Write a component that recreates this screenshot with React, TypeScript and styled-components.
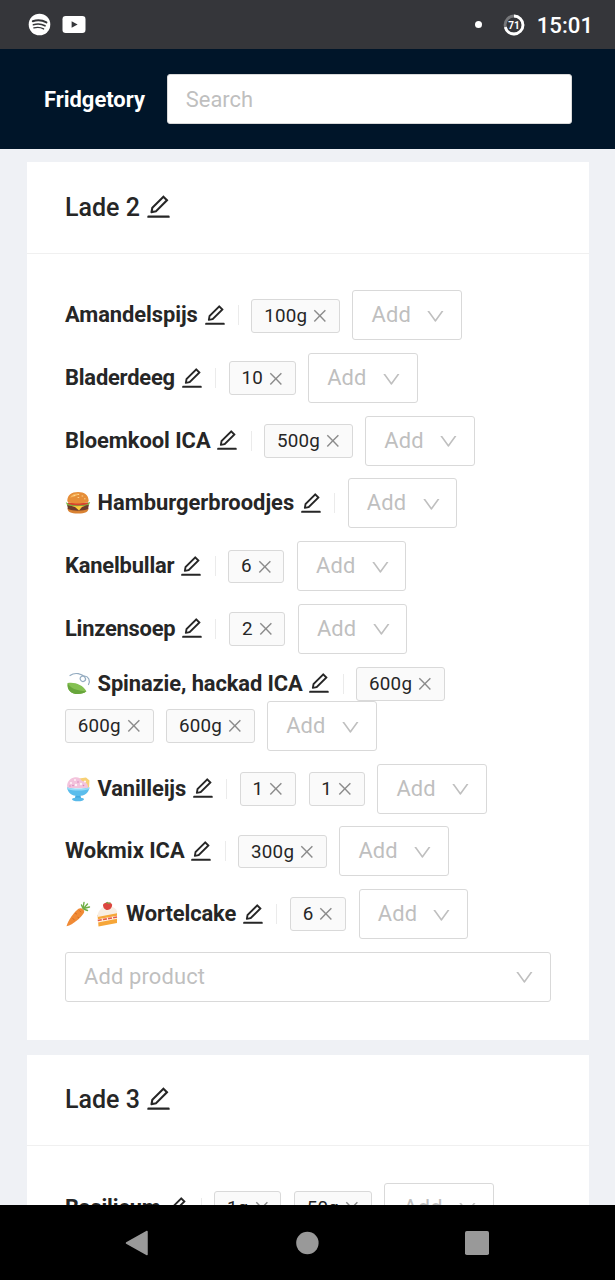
import React from 'react';
import styled, { createGlobalStyle } from 'styled-components';
import { AiOutlineClose, AiOutlineDown, AiOutlineEdit } from 'react-icons/ai';

const GlobalStyle = createGlobalStyle`
  * { box-sizing: border-box; }
  body {
    margin: 0;
    font-family: Roboto, "Liberation Sans", sans-serif;
    font-size: 21.9px;
    color: #262626;
    background: #eff1f5;
  }
`;

const Screen = styled.div`
  display: flex;
  flex-direction: column;
  width: 615px;
  height: 1280px;
  overflow: hidden;
`;

const StatusBar = styled.div`
  flex: none;
  height: 49px;
  display: flex;
  align-items: center;
  padding: 0 22px 0 28px;
  background: #35363a;
  color: #fff;
`;

const StatusGroup = styled.div<{ $end?: boolean }>`
  display: flex;
  align-items: center;
  margin-left: ${(p) => (p.$end ? 'auto' : '0')};
  gap: 11.3px;
  svg { display: block; }
`;

const Dot = styled.span`
  width: 7px;
  height: 7px;
  margin-right: 10px;
  border-radius: 50%;
  background: #fff;
`;

const Clock = styled.span`
  font-size: 22.2px;
  font-weight: 500;
  line-height: 26px;
`;

const Header = styled.header`
  flex: none;
  height: 100px;
  display: flex;
  align-items: center;
  padding: 0 43px 0 44px;
  background: #001529;
`;

const Brand = styled.div`
  width: 123px;
  color: #fff;
  font-weight: 700;
`;

const Search = styled.div`
  flex: 1;
  height: 50px;
  padding: 1px 17.8px 0;
  border: 1px solid #d9d9d9;
  border-radius: 3px;
  background: #fff;
  color: #bfbfbf;
  line-height: 48px;
`;

const Content = styled.main`
  flex: 1;
  min-height: 0;
  overflow: hidden;
  display: flex;
  flex-direction: column;
  gap: 15px;
  padding: 13.4px 26px 0 27px;
`;

const Card = styled.section`
  flex: none;
  background: #fff;
`;

const CardTitle = styled.h2`
  margin: 0;
  height: 91.5px;
  display: flex;
  align-items: center;
  gap: 6.5px;
  padding: 0 38px;
  border-bottom: 1.5px solid #f0f0f0;
  font-size: 25px;
  font-weight: 500;
`;

const CardBody = styled.div`
  display: flex;
  flex-direction: column;
  gap: 12.7px;
  padding: 36.5px 38px 38px;
`;

const Row = styled.div`
  display: flex;
  flex-wrap: wrap;
  align-items: center;
`;

const Name = styled.strong<{ $tracking: number }>`
  display: flex;
  align-items: center;
  margin-right: 12.4px;
  font-weight: 700;
  line-height: 30px;
  letter-spacing: ${(p) => p.$tracking}px;
`;

const Emoji = styled.svg.attrs({ viewBox: '0 0 26 26' })`
  flex: none;
  width: 26px;
  height: 26px;
  margin-right: 6.5px;
  & + & { margin-left: -4px; }
`;

const EditIcon = styled(AiOutlineEdit).attrs({ viewBox: '64 64 896 896' })`
  flex: none;
  width: 1em;
  height: 1em;
`;

const TitleEdit = styled(EditIcon)`
  margin-bottom: 2px;
`;

const NameEdit = styled(EditIcon)`
  margin: 0 0 1px 5.8px;
`;

const Divider = styled.span`
  width: 1px;
  height: 20px;
  margin-right: 12.6px;
  background: #ebebeb;
`;

const Tag = styled.span`
  display: flex;
  align-items: center;
  gap: 5px;
  height: 33.8px;
  margin: 0.6px 12.6px 0 0;
  padding: 0 11px 0 11.8px;
  border: 1px solid #d9d9d9;
  border-radius: 3px;
  background: #fafafa;
  font-size: 18.8px;
  letter-spacing: 0.2px;
`;

const CloseIcon = styled(AiOutlineClose).attrs({ viewBox: '64 64 896 896' })`
  width: 15.7px;
  height: 15.7px;
  color: #8c8c8c;
`;

const Select = styled.div<{ $wide?: boolean }>`
  display: flex;
  align-items: center;
  justify-content: space-between;
  width: ${(p) => (p.$wide ? '486px' : '109.5px')};
  height: 50px;
  padding: 0 16px 1px 18px;
  border: 1px solid #d9d9d9;
  border-radius: 3px;
  background: #fff;
  color: #bfbfbf;
  letter-spacing: 0.15px;
`;

const DownIcon = styled(AiOutlineDown).attrs({ viewBox: '64 64 896 896' })`
  width: 18.8px;
  height: 18.8px;
  margin-top: 3px;
`;

const NavBar = styled.nav`
  flex: none;
  height: 75px;
  display: flex;
  align-items: center;
  justify-content: space-between;
  padding: 0 126px 0 125px;
  background: #000;
  svg { display: block; }
`;

const Burger = () => (
  <Emoji>
    <path d="M2.5 18h21c0 4-3 5.500-10.500 5.500S2.500 22 2.500 18z" fill="#d98232" />
    <path d="M2 14.500h22l-1 4.500c-5 2.300-15 2.300-20 0z" fill="#6d3c2b" />
    <path d="M5 15.500h16l-4 1.500-3 3.500-4-3.500z" fill="#ffca3a" />
    <path d="M.8 12.300c3.500 2 6.700.8 9.700 2.200s8-.6 14.700-2.500l-1.200 2.800c-5 1.500-17 2-22 .2z" fill="#79b843" />
    <path d="M3 12.500h20v1.600c-5 1.700-15 1.700-20 0z" fill="#d8432e" />
    <path d="M2.300 11C2.300 5 6.500 2 13 2s10.700 3 10.700 9c0 3-21.400 3.500-21.400 0z" fill="#e68e38" />
    <path d="M5 7.500C7 4 10 3.300 14 3.400c-1 2-5 3.600-9 4.100z" fill="#f6b45b" />
    <g stroke="#ffe2a6" strokeWidth="0.8" strokeLinecap="round">
      <path d="M9 5.500h.8M13 4.500h.8M17 6h.8M13 7.500h.8M19.500 8.800h.6" />
    </g>
  </Emoji>
);

const Leaf = () => (
  <Emoji>
    <path
      d="M5 4.500C10 1 17 2.500 20 6.500c2 3.200-2 5.300-4 3.200S15.300 4.500 19.500 5s6 4.500 4 8.500"
      fill="none"
      stroke="#93abc0"
      strokeWidth="1.2"
      strokeLinecap="round"
    />
    <path d="M2.700 12c7-1.200 15 1.500 18.700 8.300-5 4.700-20.500 4.500-18.700-8.300z" fill="#84c052" />
    <path d="M2.700 12c2 5 9 8 18.700 8.300-5 4.700-20.500 4.500-18.700-8.300z" fill="#68a63c" />
  </Emoji>
);

const IceCream = () => (
  <Emoji>
    <path d="M11 17h4l1 5H10z" fill="#43a9e0" />
    <ellipse cx="13" cy="23.3" rx="6" ry="1.900" fill="#58b9e9" />
    <path d="M14 2.500 21 1.500l3.500 3-.5 7h-9z" fill="#f7d074" />
    <path d="M2.500 12C1 7 4.500 2.500 9 1.500s7 1.500 8 3.500c4 .3 6.500 4 6 7z" fill="#f3c3dc" />
    <g fill="#fff3f7">
      <circle cx="6" cy="7" r="1.100" />
      <circle cx="10" cy="4" r="1" />
      <circle cx="11" cy="9" r="1.200" />
      <circle cx="16" cy="8" r="1.200" />
      <circle cx="20" cy="5.500" r="1.100" />
    </g>
    <g fill="#d987bd">
      <circle cx="8" cy="9.500" r="0.800" />
      <circle cx="13" cy="6" r="0.800" />
      <circle cx="5" cy="10" r="0.700" />
      <circle cx="18.500" cy="9.500" r="0.800" />
    </g>
    <path d="M2 11.500c6 1.800 16 1.800 22.500 0-.8 5-4.500 8.500-11.200 8.500S2.800 16.500 2 11.500z" fill="#5bbdec" />
    <path d="M2 11.500c6 1.800 16 1.800 22.500 0l-.4 1.800c-6 1.700-16 1.700-21.700 0z" fill="#9adcf7" />
  </Emoji>
);

const Carrot = () => (
  <Emoji>
    <path
      d="M18 7.500 16.500 4M18 7.500l1-6M18.500 7.500l4-4.500M18.500 7.500l6-1.500M18.500 8l4 1.500"
      stroke="#6fae45"
      strokeWidth="1.400"
      strokeLinecap="round"
      fill="none"
    />
    <path d="M1.500 25.300C3 19.500 9 11 13.500 7.800c2.800-1.800 7 1.400 5.300 4.200C15.500 17 8.500 23.500 1.500 25.300z" fill="#f08a35" />
    <path d="m10 12 2 1.200M14.500 9.500l1.500 1.700M7.500 17.500l2 1.200M12.500 16l1.500 1" stroke="#cf651f" strokeWidth="0.800" />
  </Emoji>
);

const Cake = () => (
  <Emoji>
    <path d="M3.500 14 23 10.500v11.500L4.500 25.500z" fill="#f6a638" />
    <path d="M3.500 14C4.500 9.500 8 6 12 4.500c6 0 10.500 3 11 6v1.700L3.500 16z" fill="#f8eee3" />
    <path d="M3.700 18.300 23 14.800v3L3.900 21.500z" fill="#fff0e0" />
    <path d="m3.800 19.500 19.200-3.500" stroke="#e4584b" strokeWidth="1.600" strokeDasharray="4 1.200" />
    <path d="M9 4c0-3 8-3.500 9-.5.600 2.700-2 5.300-4.500 5.500S9 6.500 9 4z" fill="#dc473e" />
    <path d="m11.500 1.700 2-1 .8 1 2.700-.4-1.700 1.600z" fill="#73a94b" />
  </Emoji>
);

type Product = { name: string; amounts: string[]; emojis?: React.FC[]; tracking?: number };

const drawers: { title: string; products: Product[] }[] = [
  {
    title: 'Lade 2',
    products: [
      { name: 'Amandelspijs', amounts: ['100g'], tracking: -0.07 },
      { name: 'Bladerdeeg', amounts: ['10'], tracking: -0.2 },
      { name: 'Bloemkool ICA', amounts: ['500g'], tracking: -0.03 },
      { name: 'Hamburgerbroodjes', amounts: [], emojis: [Burger] },
      { name: 'Kanelbullar', amounts: ['6'], tracking: -0.18 },
      { name: 'Linzensoep', amounts: ['2'], tracking: -0.23 },
      { name: 'Spinazie, hackad ICA', amounts: ['600g', '600g', '600g'], emojis: [Leaf], tracking: -0.1 },
      { name: 'Vanilleijs', amounts: ['1', '1'], emojis: [IceCream], tracking: -0.12 },
      { name: 'Wokmix ICA', amounts: ['300g'] },
      { name: 'Wortelcake', amounts: ['6'], emojis: [Carrot, Cake], tracking: -0.1 },
    ],
  },
  { title: 'Lade 3', products: [{ name: 'Basilicum', amounts: ['1g', '50g'], tracking: -0.15 }] },
];

const ProductRow = ({ name, amounts, emojis = [], tracking = 0 }: Product) => (
  <Row>
    <Name $tracking={tracking}>
      {emojis.map((Picture, i) => (
        <Picture key={i} />
      ))}
      {name}
      <NameEdit />
    </Name>
    <Divider />
    {amounts.map((amount, i) => (
      <Tag key={i}>
        {amount}
        <CloseIcon />
      </Tag>
    ))}
    <Select>
      Add
      <DownIcon />
    </Select>
  </Row>
);

const SpotifyIcon = () => (
  <svg width="23" height="23" viewBox="0 0 23 23">
    <circle cx="11.5" cy="11.5" r="10.8" fill="#fff" />
    <g fill="none" stroke="#35363a" strokeLinecap="round">
      <path d="M4.8 8.2c4.8-1.5 9.6-1 13.6 1.2" strokeWidth="2" />
      <path d="M5.4 11.7c4.2-1.2 8.2-.8 11.6 1.1" strokeWidth="1.7" />
      <path d="M5.9 14.9c3.5-1 6.8-.6 9.7 1" strokeWidth="1.4" />
    </g>
  </svg>
);

const YoutubeIcon = () => (
  <svg width="24" height="17" viewBox="0 0 24 17">
    <rect x="0.5" y="0" width="23" height="17" rx="3.2" fill="#fff" />
    <path d="M9.6 5.2v6.6l6-3.3z" fill="#35363a" />
  </svg>
);

const BatteryIcon = () => (
  <svg width="22" height="22" viewBox="0 0 22 22">
    <circle cx="11" cy="11" r="9" fill="none" stroke="#77787b" strokeWidth="2.8" />
    <circle
      cx="11"
      cy="11"
      r="9"
      fill="none"
      stroke="#fff"
      strokeWidth="2.8"
      pathLength="100"
      strokeDasharray="71 29"
      transform="rotate(-90 11 11)"
    />
    <text x="11" y="14.6" textAnchor="middle" fontSize="10" fontWeight="700" fill="#fff">
      71
    </text>
  </svg>
);

export default function App() {
  return (
    <Screen>
      <GlobalStyle />
      <StatusBar>
        <StatusGroup>
          <SpotifyIcon />
          <YoutubeIcon />
        </StatusGroup>
        <StatusGroup $end>
          <Dot />
          <BatteryIcon />
          <Clock>15:01</Clock>
        </StatusGroup>
      </StatusBar>
      <Header>
        <Brand>Fridgetory</Brand>
        <Search>Search</Search>
      </Header>
      <Content>
        {drawers.map((drawer) => (
          <Card key={drawer.title}>
            <CardTitle>
              {drawer.title}
              <TitleEdit />
            </CardTitle>
            <CardBody>
              {drawer.products.map((product) => (
                <ProductRow key={product.name} {...product} />
              ))}
              <Select $wide>
                Add product
                <DownIcon />
              </Select>
            </CardBody>
          </Card>
        ))}
      </Content>
      <NavBar>
        <svg width="24" height="26" viewBox="0 0 24 26">
          <path d="M1.5 13 22 1.5v23z" fill="#999" stroke="#999" strokeWidth="1.5" strokeLinejoin="round" />
        </svg>
        <svg width="24" height="24" viewBox="0 0 24 24">
          <circle cx="12.4" cy="12" r="11.2" fill="#999" />
        </svg>
        <svg width="24" height="24" viewBox="0 0 24 24">
          <rect width="24" height="24" rx="1.8" fill="#999" />
        </svg>
      </NavBar>
    </Screen>
  );
}
